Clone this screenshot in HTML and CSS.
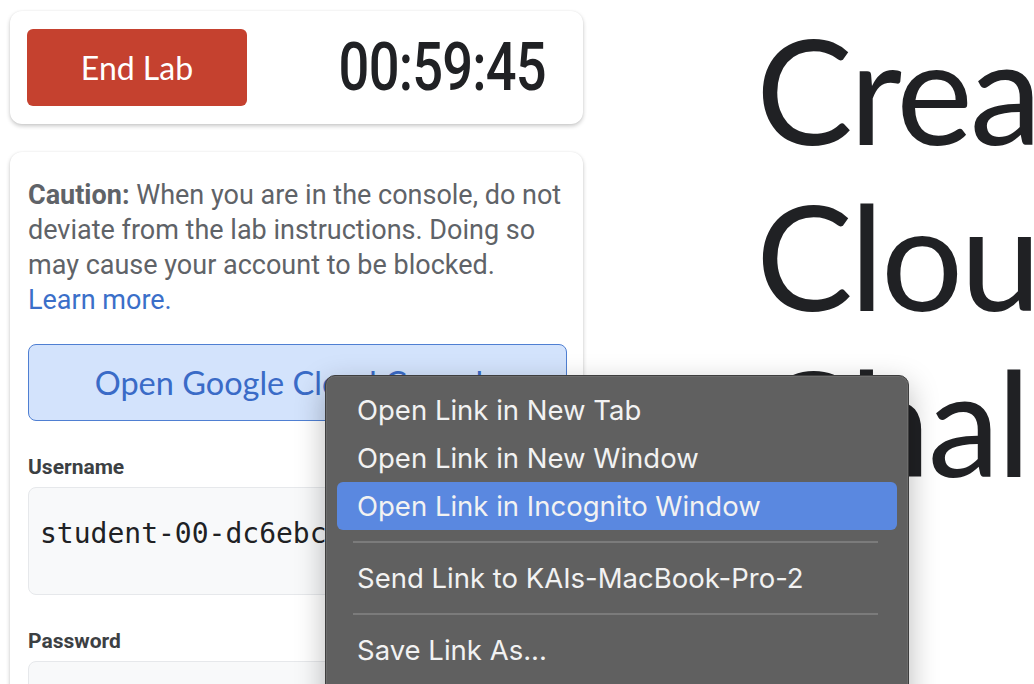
FILE: index.html
```html
<!DOCTYPE html>
<html lang="en">
<head>
<meta charset="utf-8">
<title>Lab</title>
<link rel="stylesheet" href="styles.css">
</head>
<body>
<div class="page">
  <aside class="side">
    <section class="card timer-card">
      <button class="end-btn">End Lab</button>
      <div class="timer"><span class="timer-text">00:59:45</span></div>
    </section>
    <section class="card info-card">
      <p class="caution"><b>Caution:</b> When you are in the console, do not deviate from the lab instructions. Doing so may cause your account to be blocked. <a class="learn" href="#">Learn more.</a></p>
      <button class="console-btn">Open Google Cloud Console</button>
      <label class="field-label">Username</label>
      <div class="field"><span class="mono">student-00-dc6ebc2b8f1e@qwiklabs.net</span></div>
      <label class="field-label pw">Password</label>
      <div class="field"><span class="mono">••••••••••</span></div>
    </section>
  </aside>
  <main class="content">
    <h1 class="title">Create and Manage<br>Cloud Resources:<br>Challenge Lab</h1>
  </main>
</div>
<div class="menu">
  <div class="item">Open Link in New Tab</div>
  <div class="item">Open Link in New Window</div>
  <div class="item active">Open Link in Incognito Window</div>
  <div class="sep"></div>
  <div class="item">Send Link to KAIs-MacBook-Pro-2</div>
  <div class="sep"></div>
  <div class="item">Save Link As...</div>
  <div class="item">Copy Link Address</div>
</div>
</body>
</html>
```
FILE: styles.css
```css
* { box-sizing: border-box; }
html, body { margin: 0; padding: 0; }
body {
  background: #ffffff;
  width: 1034px;
  height: 684px;
  overflow: hidden;
  font-family: Roboto, "Liberation Sans", sans-serif;
  position: relative;
}
.page {
  display: flex;
  padding: 11px 0 0 10px;
}
.side {
  width: 573px;
  flex: none;
  display: flex;
  flex-direction: column;
  gap: 28px;
}
.card {
  background: #fff;
  border-radius: 12px;
  box-shadow: 0 2px 4px rgba(0,0,0,0.22), 0 0 2px rgba(0,0,0,0.06);
}
.timer-card {
  height: 113px;
  display: flex;
  align-items: center;
  padding: 0 37px 0 17px;
  justify-content: space-between;
}
.end-btn {
  width: 220px;
  height: 77px;
  border: none;
  border-radius: 6px;
  background: #c5412f;
  color: #fff;
  font-family: Lato, "Open Sans", sans-serif;
  font-size: 32px;
  font-weight: 400;
  padding: 0;
}
.timer {
  width: 206px;
  display: flex;
  justify-content: flex-end;
}
.timer-text {
  display: inline-block;
  font-family: Roboto, sans-serif;
  font-size: 67px;
  font-weight: 500;
  color: #202124;
  transform: scaleX(0.81);
  transform-origin: right center;
  line-height: 1;
  letter-spacing: -1px;
}
.info-card {
  height: 600px;
  padding: 26px 16px 0 18px;
  display: flex;
  flex-direction: column;
  align-items: flex-start;
}
.info-card > * { flex-shrink: 0; }
.caution {
  margin: 0;
  font-size: 27px;
  line-height: 35px;
  color: #5f6368;
  width: 537px;
}
.caution b { font-weight: 700; color: #5f6368; }
.learn { color: #3b6fc9; text-decoration: none; }
.console-btn {
  margin-top: 26px;
  width: 539px;
  height: 77px;
  background: #d3e3fc;
  border: 1.5px solid #4f7fd2;
  border-radius: 8px;
  color: #3a6bc7;
  font-family: Lato, "Open Sans", sans-serif;
  font-size: 32.5px;
  padding: 0;
}
.field-label {
  margin-top: 34px;
  font-size: 21px;
  font-weight: 700;
  color: #3c4043;
  line-height: 25px;
}
.field {
  margin-top: 7px;
  width: 539px;
  height: 108px;
  background: #f8f9fa;
  border: 1px solid #e6e8eb;
  border-radius: 8px;
  padding: 0 11px 16px;
  display: flex;
  align-items: center;
  overflow: hidden;
  white-space: nowrap;
}
.mono {
  font-family: "DejaVu Sans Mono", "Liberation Mono", monospace;
  font-size: 28px;
  color: #202124;
}
.content {
  padding-left: 173px;
  white-space: nowrap;
}
.title {
  margin: -5px 0 0 0;
  font-family: Lato, "Open Sans", sans-serif;
  font-weight: 400;
  font-size: 145px;
  line-height: 166px;
  letter-spacing: -3px;
  color: #202124;
}
.menu {
  position: absolute;
  left: 325px;
  top: 375px;
  width: 584px;
  height: 360px;
  background: #606060;
  border: 1px solid #3e3e3e;
  border-radius: 10px;
  box-shadow: 0 0 0 1px rgba(255,255,255,0.08) inset, 0 10px 30px rgba(0,0,0,0.28);
  padding: 10px 11px;
  font-family: Inter, "Noto Sans", sans-serif;
  color: #f2f2f2;
}
.item {
  height: 48px;
  line-height: 48px;
  padding-left: 20px;
  font-size: 27.5px;
  border-radius: 6px;
}
.item.active { background: #5a88e0; }
.sep {
  height: 24px;
  display: flex;
  align-items: center;
  padding: 0 19px 0 16px;
}
.sep::before {
  content: "";
  display: block;
  width: 100%;
  height: 2px;
  background: #7b7b7b;
}
```
